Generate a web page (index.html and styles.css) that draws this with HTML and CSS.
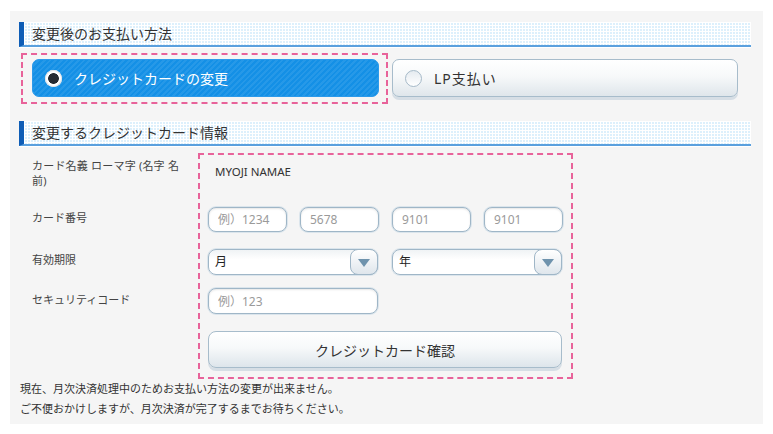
FILE: index.html
```html
<!DOCTYPE html>
<html lang="ja">
<head>
<meta charset="utf-8">
<title>お支払い方法の変更</title>
<link rel="stylesheet" href="styles.css">
</head>
<body>
<div class="panel">
  <h2 class="heading">変更後のお支払い方法</h2>
  <div class="method-row">
    <div class="dash-box method-box">
      <div class="method method-active"><span class="radio radio-on"></span><span class="method-text">クレジットカードの変更</span></div>
    </div>
    <div class="method method-off"><span class="radio radio-off"></span><span class="method-text lp">LP支払い</span></div>
  </div>

  <h2 class="heading heading-2">変更するクレジットカード情報</h2>
  <div class="form">
    <div class="labels">
      <div class="label label-name">カード名義 ローマ字 (名字 名前)</div>
      <div class="label label-num">カード番号</div>
      <div class="label label-exp">有効期限</div>
      <div class="label label-sec">セキュリティコード</div>
    </div>
    <div class="dash-box fields">
      <div class="name-row">MYOJI NAMAE</div>
      <div class="card-row">
        <input class="field" type="text" placeholder="例）1234">
        <input class="field" type="text" placeholder="5678">
        <input class="field" type="text" placeholder="9101">
        <input class="field" type="text" placeholder="9101">
      </div>
      <div class="exp-row">
        <div class="select"><span class="select-text">月</span><span class="select-btn"><span class="tri"></span></span></div>
        <div class="select"><span class="select-text">年</span><span class="select-btn"><span class="tri"></span></span></div>
      </div>
      <div class="sec-row">
        <input class="field" type="text" placeholder="例）123">
      </div>
      <button class="confirm" type="button">クレジットカード確認</button>
    </div>
  </div>
  <p class="notes">現在、月次決済処理中のためお支払い方法の変更が出来ません。<br>ご不便おかけしますが、月次決済が完了するまでお待ちください。</p>
</div>
</body>
</html>
```

FILE: styles.css
```css
* { box-sizing: border-box; }
html, body { margin: 0; padding: 0; background: #ffffff; }
body {
  font-family: "Noto Sans", "Noto Sans CJK JP", sans-serif;
  color: #333;
}
.panel {
  margin: 11px 10px 0 10px;
  width: 753px;
  height: 413px;
  background: #f5f5f5;
  padding: 11px 12px 0 9px;
}
.heading {
  margin: 0;
  height: 25px;
  line-height: 23px;
  font-size: 14px;
  font-weight: normal;
  color: #333;
  padding-left: 8px;
  border-left: 5px solid #0e5db6;
  border-bottom: 2px solid #5aa0de;
  box-shadow: 0 1px 0 #ffffff;
  background-color: #ddf0fc;
  background-image:
    linear-gradient(90deg, #ffffff 1px, transparent 1px),
    linear-gradient(#ffffff 1px, transparent 1px);
  background-size: 3px 3px;
}
.heading-2 { margin-top: 17px; }

.dash-box { border: 2px dashed #e8639a; }

.method-row {
  display: flex;
  align-items: flex-start;
  gap: 4px;
  margin-top: 6px;
  margin-left: 2px;
}
.method-box {
  width: 367px;
  height: 51px;
  padding: 4px 7px 5px 9px;
}
.method {
  height: 38px;
  border-radius: 7px;
  display: flex;
  align-items: center;
  padding-left: 12px;
  font-size: 14px;
}
.method-active {
  background-color: #1490e6;
  background-image: repeating-linear-gradient(-45deg, rgba(255,255,255,0.08) 0 2px, rgba(255,255,255,0) 2px 4px);
  border: 1px solid #2d9aea;
  color: #fff;
}
.method-off {
  margin-top: 6px;
  width: 346px;
  background: linear-gradient(#ffffff 0%, #f7f9fa 45%, #dfe6eb 100%);
  border: 1px solid #a7bccb;
  box-shadow: 0 3px 0 #d6dee5;
  color: #333;
}
.method-text { margin-left: 12px; }
.lp { letter-spacing: 1px; }
.radio {
  width: 17px;
  height: 17px;
  border-radius: 50%;
  flex: none;
}
.radio-on {
  background: radial-gradient(circle, #262b33 0 5px, #ffffff 5.7px);
  box-shadow: inset 0 0 0 1px #dfe3e8;
}
.radio-off {
  border: 1px solid #a5b9c8;
  background: linear-gradient(#e5ebf0, #ffffff);
}

.form {
  display: flex;
  margin-top: 7px;
}
.labels {
  width: 166px;
  margin-left: 13px;
  padding-top: 5px;
  font-size: 11px;
  color: #444;
}
.label-name {
  width: 152px;
  line-height: 15px;
  height: 45px;
  letter-spacing: 0.2px;
}
.label-num { line-height: 30px; height: 30px; }
.label-exp { line-height: 30px; height: 30px; margin-top: 12px; }
.label-sec { line-height: 30px; height: 30px; margin-top: 10px; }

.fields {
  width: 375px;
  height: 226px;
  padding: 8px 9px 0 8px;
}
.name-row {
  height: 36px;
  line-height: 18px;
  padding-left: 7px;
  font-size: 11.5px;
  color: #333;
}
.card-row {
  margin-top: 8px;
  display: grid;
  grid-template-columns: repeat(4, 79px);
  column-gap: 13px;
}
.field {
  height: 25px;
  width: 100%;
  border: 1px solid #9fb6c7;
  border-radius: 8px;
  background: #fff;
  box-shadow: inset 0 1px 2px rgba(0,0,0,0.10), 0 0 0 1px #dbe5ec;
  padding: 0 9px;
  font-family: "Noto Sans", "Noto Sans CJK JP", sans-serif;
  font-size: 12px;
  color: #333;
  outline: none;
}
.field::placeholder { color: #9a9a9a; }
.exp-row {
  margin-top: 17px;
  display: grid;
  grid-template-columns: 170px 170px;
  column-gap: 14px;
}
.select {
  height: 26px;
  display: flex;
  border: 1px solid #9fb6c7;
  border-radius: 8px;
  background: linear-gradient(#f0f3f5, #ffffff 40%);
  box-shadow: 0 0 0 1px #dbe5ec;
}
.select-text {
  flex: 1;
  padding-left: 6px;
  line-height: 24px;
  font-size: 12px;
  color: #222;
}
.select-btn {
  width: 28px;
  margin: -1px -1px -1px 0;
  border: 1px solid #9fb6c7;
  border-radius: 8px;
  background: linear-gradient(#ffffff, #dfe6ec);
  display: flex;
  align-items: center;
  justify-content: center;
}
.tri {
  width: 0;
  height: 0;
  border-left: 6px solid transparent;
  border-right: 6px solid transparent;
  border-top: 8px solid #6f93ad;
  margin-top: 1px;
}
.sec-row {
  margin-top: 13px;
  width: 170px;
}
.sec-row .field { height: 26px; }
.confirm {
  display: block;
  margin-top: 17px;
  width: 354px;
  height: 37px;
  border: 1px solid #a7bccb;
  border-radius: 8px;
  background: linear-gradient(#ffffff 0%, #f7f9fa 45%, #dde5eb 100%);
  box-shadow: 0 3px 0 #d6dee5;
  font-family: "Noto Sans", "Noto Sans CJK JP", sans-serif;
  font-size: 14px;
  color: #333;
  padding: 0;
}
.notes {
  margin: 0 0 0 1px;
  font-size: 11px;
  line-height: 20px;
  color: #333;
}
```
